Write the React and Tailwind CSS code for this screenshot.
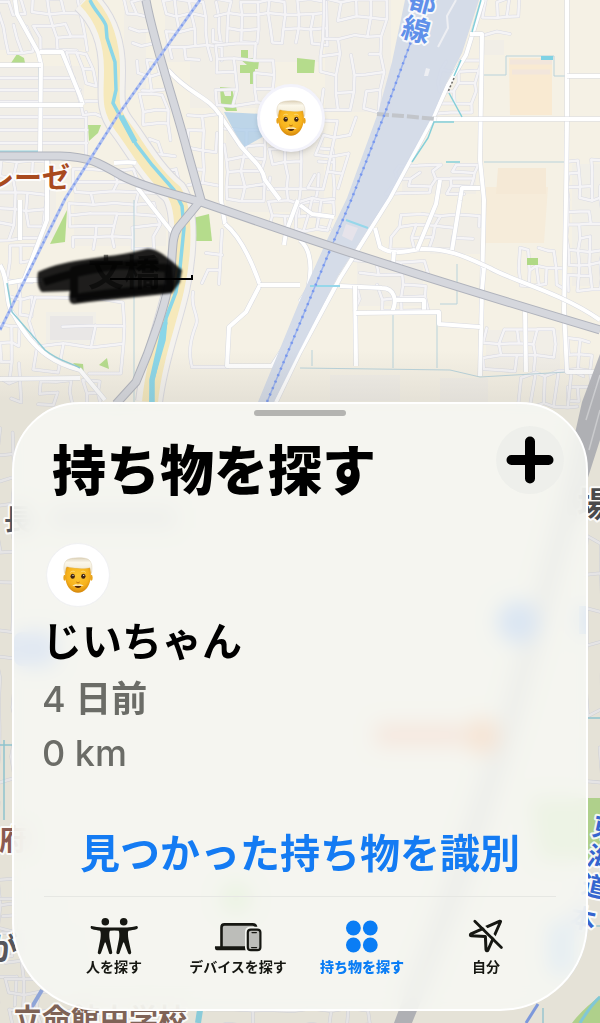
import { useId } from "react";
import clsx from "clsx";

// Small repeatable offset so that the streets do not look ruled
function jitter(a, b, amount) {
  const n = Math.sin(a * 12.9898 + b * 78.233) * 43758.5453;
  return (n - Math.floor(n) - 0.5) * amount;
}

// Builds a cols x rows street grid as one path, leaned sideways by `lean`
function grid(x, y, w, h, cols, rows, lean = 0) {
  const cw = w / cols;
  const ch = h / rows;
  const point = (c, r) => {
    const px = x + cw * c + (lean * r) / rows + jitter(x + c, y + r, cw * 0.35);
    const py = y + ch * r + jitter(y + c, x + r, ch * 0.3);
    return `${px.toFixed(1)} ${py.toFixed(1)}`;
  };
  let d = "";
  for (let r = 0; r <= rows; r++) {
    for (let c = 0; c <= cols; c++) {
      const skip = jitter(x + c * 3, y + r * 7, 1);
      if (c < cols && skip < 0.25) d += `M${point(c, r)}L${point(c + 1, r)}`;
      if (r < rows && skip > -0.22) d += `M${point(c, r)}L${point(c, r + 1)}`;
    }
  }
  return d;
}

const streets = [
  "M0 78H40M0 90H40M0 102H40M0 117H40M0 130H40M0 143H40",
  "M42 78H74M42 90H80M42 117H86M42 130H87M42 143H87M86 112V155",
  grid(-5, 0, 26, 52, 2, 4, 14),
  grid(30, 0, 48, 50, 3, 4, 12),
  grid(66, 52, 22, 64, 2, 4, 18),
  grid(122, 0, 22, 90, 2, 6, 20),
  grid(163, 0, 52, 60, 4, 4, 8),
  grid(215, 0, 110, 44, 8, 3),
  grid(215, 44, 60, 60, 3, 4),
  grid(325, 0, 60, 110, 4, 6, -4),
  grid(140, 95, 24, 90, 2, 6, 16),
  grid(190, 115, 28, 70, 2, 4),
  grid(226, 130, 36, 70, 2, 5),
  grid(270, 150, 62, 78, 4, 6),
  grid(325, 120, 30, 70, 2, 4, -16),
  grid(0, 162, 48, 78, 3, 5, -6),
  grid(72, 170, 85, 78, 4, 7),
  grid(10, 245, 24, 70, 2, 4, -4),
  grid(36, 300, 90, 70, 3, 3, -6),
  grid(0, 325, 20, 75, 2, 4),
  grid(40, 380, 60, 26, 4, 2),
  grid(444, 60, 35, 54, 2, 5, -8),
  grid(484, 0, 36, 33, 3, 2),
  grid(568, 160, 34, 130, 3, 10),
  grid(400, 165, 78, 28, 4, 4, -12),
  grid(520, 250, 44, 36, 5, 2),
  grid(357, 262, 68, 48, 3, 4),
  grid(484, 330, 70, 40, 4, 3, -2),
  grid(568, 340, 22, 60, 2, 4),
  grid(400, 215, 80, 34, 4, 3, -8),
  grid(522, 374, 60, 30, 5, 1, -4),
  grid(300, 200, 34, 30, 3, 2, -6),
  grid(-2, 430, 16, 600, 1, 24),
  grid(586, 540, 16, 240, 1, 7),
  grid(0, 900, 70, 125, 5, 8, 12),
  grid(210, 1010, 160, 16, 8, 1),
  "M193 292C190 310 200 315 196 325C188 345 190 360 192 367H228",
  "M206 253L222 255M222 230L219 284M202 283L208 270H219",
];

const localRoads = [
  "M15 0L17 14L38 52L41 64L40 154",
  "M0 65H41",
  "M40 52H62L80 96L83 105",
  "M0 105H83",
  "M168 70C190 95 208 96 220 115L240 145C250 158 262 165 265 180L280 200",
  "M221 115V200L225 224",
  "M114 163C125 162 132 162 136 163",
  "M137 187L150 204L172 232",
  "M225 224C240 236 252 262 260 285",
  "M260 285L246 312L229 327L227 366L272 366L300 322",
  "M260 285H300",
  "M298 200L286 232L284 245",
  "M20 200V240M47 160V220L24 280L7 283",
  "M0 265C10 280 4 305 14 315C35 355 60 365 80 370L105 400",
  "M0 379L80 378",
  "M25 280H42",
  "M483 0L466 55L448 85L433 118L390 198L340 278L300 352L276 402",
  "M470 34H482L480 160L484 200L482 290L480 376",
  "M567 0V120L566 200L564 310L567 372H594",
  "M433 119H600",
  "M567 76H600",
  "M375 228L380 247C392 255 402 252 420 249C450 248 468 258 490 268C510 280 560 292 600 320",
  "M340 286L382 288C394 288 398 300 392 312M396 300H424V312",
  "M355 286L356 366",
  "M356 313L439 312V324L480 327",
  "M417 250L436 204L440 180",
  "M460 200L452 250M484 268L482 290",
  "M525 310L526 372",
  "M480 188H462L460 200",
  "M300 205L312 214L334 217",
  "M300 240C314 252 311 275 308 290L300 302",
  "M394 252L393 264",
];

const blocks = [
  [0, 0, 84, 50],
  [0, 66, 84, 86],
  [124, 0, 22, 90],
  [165, 0, 155, 62],
  [190, 62, 84, 46],
  [325, 0, 66, 112],
  [226, 128, 98, 84],
  [0, 164, 56, 74],
  [74, 180, 92, 66],
  [46, 312, 50, 32],
  [484, 40, 20, 15],
  [572, 164, 28, 122],
  [357, 262, 66, 44],
  [430, 214, 52, 40],
  [486, 330, 74, 40],
  [402, 164, 74, 30],
  [330, 375, 70, 26],
  [440, 378, 48, 24],
];

function MapLabel({ x, y, size, fill, rotate = 0, children }) {
  return (
    <text
      x={x}
      y={y}
      fontSize={size}
      fontWeight="700"
      fill={fill}
      stroke="#ffffff"
      strokeOpacity="0.85"
      strokeWidth="4"
      strokeLinejoin="round"
      paintOrder="stroke"
      transform={`rotate(${rotate} ${x} ${y})`}
    >
      {children}
    </text>
  );
}

function MapView() {
  return (
    <svg
      className="absolute inset-0 h-full w-full"
      viewBox="0 0 600 1023"
      preserveAspectRatio="xMinYMin slice"
      role="img"
      aria-label="地図"
      fontFamily="'Noto Sans CJK JP', sans-serif"
    >
      <defs>
        <linearGradient id="shade" x1="0" y1="0" x2="0" y2="1">
          <stop offset="0" stopColor="#8d8a86" stopOpacity="0" />
          <stop offset="1" stopColor="#8d8a86" stopOpacity="0.15" />
        </linearGradient>
        <filter id="soft" x="-10%" y="-20%" width="120%" height="140%">
          <feGaussianBlur stdDeviation="1.2" />
        </filter>
      </defs>
      <rect width="600" height="1023" fill="#f5f1e5" />

      {/* Built-up blocks */}
      <g fill="#f0eee9" opacity="0.7">
        {blocks.map(([x, y, w, h]) => (
          <rect key={`${x}-${y}`} x={x} y={y} width={w} height={h} />
        ))}
      </g>
      <path d="M486 187H548L544 243H485z" fill="#f6ecda" />
      <path d="M509 58H552V115H510z" fill="#f9ead2" />
      <path d="M498 168H546V194H496z" fill="#f5e9d6" />
      <path d="M510 62H552M512 72H550" stroke="#f2e6dc" strokeWidth="5" />
      <path d="M50 316H93V340H50z" fill="#e9e7e6" />

      {/* Parks */}
      <g fill="#b5dc8c">
        <path d="M11 63L17 54L24 58L25 63z" />
        <path d="M88 125L101 125L98 133L89 141z" />
        <path d="M241 50H248V58H254V52V60L259 61L258 69H255V84H250V73H240V65H247L241 60z" />
        <path d="M220 87L232 88L237 111L226 111L221 103z" />
        <path d="M297 58L315 60L314 73H297z" />
        <path d="M50 244L67 210L65 242z" />
        <path d="M193 218L209 214L212 241H194z" />
        <path d="M73 363L83 364L84 374z" />
        <path d="M99 365L107 358L109 369z" />
        <path d="M530 798H600V860H540z" />
        <path d="M572 1023C580 1012 590 1004 600 996V1023z" />
      </g>
      <path d="M223 90H231V96H225z" fill="#f0eee8" />

      {/* Minor streets */}
      {streets.map((d, i) => (
        <g key={i} fill="none" strokeLinecap="round">
          <path d={d} stroke="#d9dae2" strokeWidth="3.5" />
          <path d={d} stroke="#f5f4f6" strokeWidth="2.5" />
        </g>
      ))}
      <path d="M527 258H538V265H527z" fill="#b0d985" />
      <g fill="none" stroke="#b9d3db" strokeWidth="1">
        <path d="M134 200V402M39 64V154" />
        <path d="M300 368L450 370L480 377L567 372" />
        <path d="M457 264V304H440M484 75H506V56H554V76H567M484 162H567" />
        <path d="M393 310V368M437 312V368M312 350V366" />
      </g>

      {/* River and banks */}
      <g fill="none">
        <path
          d="M84 0C106 20 112 45 112 70S108 108 122 126S150 172 174 192C186 210 184 255 176 290S154 360 149 402"
          stroke="#d9d9df"
          strokeWidth="28"
        />
        <path
          d="M84 0C106 20 112 45 112 70S108 108 122 126S150 172 174 192C186 210 184 255 176 290S154 360 149 402"
          stroke="#f4f2ee"
          strokeWidth="26"
        />
        <path
          d="M86 0C106 20 112 45 112 70S108 108 122 126S150 172 174 192C186 210 184 255 176 290S154 360 150 402"
          stroke="#f6e9bb"
          strokeWidth="16"
        />
        <path
          d="M90 0C94 10 105 20 106 26L107 38L115 62L116 90L113 103L120 116L136 144L152 165L174 190L182 206L184 228L180 268L176 292L166 318L164 340L152 382L151 402"
          stroke="#8ad6e8"
          strokeWidth="3.5"
        />
        <path d="M121 116L135 142M165 322L160 345L152 380V402" stroke="#8ad6e8" strokeWidth="5.5" />
      </g>

      {/* View cone next to the pin */}
      <path d="M224 112L262 114L264 136L243 148z" fill="#a9cbe8" opacity="0.75" />

      {/* Local roads */}
      {localRoads.map((d) => (
        <g key={d} fill="none" strokeLinejoin="round">
          <path d={d} stroke="#d8dae0" strokeWidth="5" />
          <path d={d} stroke="#ffffff" strokeWidth="4" />
        </g>
      ))}

      {/* Railway yard */}
      <path
        d="M405 0H479L462 53L446 84L432 117L388 198L338 276L300 350L274 402H258L300 300L327 240L347 198L378 113L392 62z"
        fill="#d2dae8"
        opacity="0.94"
      />
      <path d="M456 0L447 16L448 28L438 47" fill="none" stroke="#eeeff3" strokeWidth="2" />
      <path d="M426 68L430 69L428 76L424 76z" fill="#eeeff3" />
      <path d="M346 224L358 228L352 241L342 236z" fill="#e6e3ea" />
      <path
        d="M377 114L403 116L437 119"
        fill="none"
        stroke="#c2c5ca"
        strokeWidth="4"
        strokeDasharray="12 3"
      />
      <path d="M310 286L340 286M346 220L368 228" stroke="#96d7ea" strokeWidth="2" />
      <path d="M413 36L385 113L352 198L330 250L300 323L267 402" fill="none" stroke="#9bb3ee" strokeWidth="1.5" />
      <path
        d="M413 36L385 113L352 198L330 250L300 323L267 402"
        fill="none"
        stroke="#7797ee"
        strokeWidth="2.5"
        strokeDasharray="2 5"
      />
      <path
        d="M481 0L472 32M461 60L454 76M449 93L462 117M454 122H434L428 138L412 162M446 162H460"
        fill="none"
        stroke="#84cfd9"
        strokeWidth="1.5"
      />
      <path d="M541 56H553V60H541z" fill="#7fd2e4" />
      <path d="M454 78L448 92" stroke="#6c6a66" strokeWidth="1.5" strokeDasharray="2 2" />
      <path d="M7 283L12 312L45 350C60 362 70 362 80 368" fill="none" stroke="#8fcbd6" strokeWidth="1.5" />
      <path d="M0 152H38" stroke="#9bd8e6" strokeWidth="3" />

      {/* Main roads */}
      <g fill="none" strokeLinejoin="round">
        <g stroke="#b0b3bc" strokeWidth="9">
          <path d="M146 0C154 44 174 100 187 150L201 200L178 228C172 236 173 248 171 270C168 300 150 350 136 382L116 404" />
          <path d="M0 156H60C90 157 98 162 122 176C145 188 175 194 201 202L300 236C400 270 500 300 600 330" />
        </g>
        <g stroke="#d5d7dd" strokeWidth="7">
          <path d="M146 0C154 44 174 100 187 150L201 200L178 228C172 236 173 248 171 270C168 300 150 350 136 382L116 404" />
          <path d="M0 156H60C90 157 98 162 122 176C145 188 175 194 201 202L300 236C400 270 500 300 600 330" />
        </g>
      </g>

      {/* Rail line */}
      <path d="M200 0L118 115L65 199L0 330" fill="none" stroke="#afc0f0" strokeWidth="3" />
      <path
        d="M200 0L118 115L65 199L0 330"
        fill="none"
        stroke="#7f9bea"
        strokeWidth="2"
        strokeDasharray="2 4"
      />

      {/* Covered part, mostly hidden by the sheet */}
      <path d="M600 354L582 402L560 500L500 720L440 900L394 1023H412L470 880L520 720L584 490L600 440z" fill="#b6b7bd" />
      <path d="M600 375L586 420M600 410L589 450" stroke="#d5d6da" strokeWidth="1.5" />
      <circle cx="518" cy="622" r="21" fill="#1f74ff" />
      <rect x="14" y="632" width="42" height="34" rx="8" fill="#4a84ff" />
      <rect x="579" y="606" width="8" height="28" fill="#2f78ff" />
      <circle cx="482" cy="736" r="18" fill="#ff6a10" />
      <path d="M376 724H462V746H376z" fill="#ff7f58" />
      <path d="M50 508H175V528H50z" fill="#c0c0c6" />
      <circle cx="236" cy="898" r="15" fill="#a0dd78" />
      <rect x="548" y="920" width="26" height="56" rx="12" fill="#78b4ff" />
      <path d="M4 740V820M0 745H12M586 718H600" stroke="#8fcdda" strokeWidth="1.5" />
      <path d="M200 1010L198 1023" stroke="#8ad6e8" strokeWidth="6" />
      <path d="M588 926H600M543 1008V1023" stroke="#9cd0dc" strokeWidth="1.5" />
      <path d="M580 1023C588 1010 594 1002 600 997" fill="none" stroke="#7fd2e4" strokeWidth="3" />
      <path d="M538 1004L526 1023" stroke="#7b9bea" strokeWidth="3" />
      <path d="M42 990L30 1010" stroke="#8fa8e6" strokeWidth="4" />

      <rect y="350" width="600" height="50" fill="url(#shade)" />
      <rect y="400" width="600" height="623" fill="#8d8a86" opacity="0.15" />

      <MapLabel x={-14} y={188} size={28} fill="#a94a1e">
        レーゼ
      </MapLabel>
      <MapLabel x={407} y={7} size={28} fill="#6090ea" rotate={15}>
        都
      </MapLabel>
      <MapLabel x={400} y={36} size={28} fill="#6090ea" rotate={15}>
        線
      </MapLabel>
      <MapLabel x={4} y={530} size={28} fill="#55565c">
        長
      </MapLabel>
      <MapLabel x={577} y={517} size={34} fill="#4a4a4c">
        場
      </MapLabel>
      <MapLabel x={-1} y={850} size={28} fill="#8a5b50">
        府
      </MapLabel>
      <MapLabel x={-14} y={960} size={32} fill="#55565c">
        が
      </MapLabel>
      <MapLabel x={13} y={1030} size={29} fill="#7f6357">
        立命館中学校
      </MapLabel>
      <MapLabel x={591} y={835} size={26} fill="#3565cf" rotate={12}>
        東
      </MapLabel>
      <MapLabel x={586} y={864} size={26} fill="#3565cf" rotate={12}>
        海
      </MapLabel>
      <MapLabel x={580} y={893} size={26} fill="#3565cf" rotate={12}>
        道
      </MapLabel>
      <MapLabel x={568} y={925} size={26} fill="#3565cf" rotate={12}>
        本
      </MapLabel>

      {/* Marker strokes over a place name */}
      <g filter="url(#soft)">
        <path
          d="M38 272C70 257 110 259 146 249C158 247 172 262 182 270L180 282L172 293C140 297 110 299 74 304C68 304 69 296 70 291L42 292C37 288 37 278 38 272z"
          fill="#000000"
          opacity="0.88"
        />
        <path
          d="M44 282C80 270 120 264 158 262M74 298V270C110 260 140 268 168 268L170 288C140 290 110 292 76 298"
          fill="none"
          stroke="#000000"
          strokeWidth="8"
          strokeLinejoin="round"
          opacity="0.7"
        />
      </g>
      <text x="88" y="286" fontSize="36" fontWeight="700" fill="#000000" opacity="0.5">
        文橋
      </text>
      <path d="M110 279H192V275" fill="none" stroke="#000000" strokeWidth="2" />
    </svg>
  );
}

function GrandpaFace() {
  const id = useId();
  return (
    <svg className="h-9 w-[30px]" viewBox="0 0 90 108" aria-hidden="true">
      <defs>
        <radialGradient id={`${id}skin`} cx="0.5" cy="0.38" r="0.65">
          <stop offset="0" stopColor="#fdc935" />
          <stop offset="0.65" stopColor="#f7b21c" />
          <stop offset="1" stopColor="#cf800a" />
        </radialGradient>
        <linearGradient id={`${id}hair`} x1="0" y1="0" x2="0" y2="1">
          <stop offset="0" stopColor="#ddd2ba" />
          <stop offset="0.3" stopColor="#fbf7ea" />
          <stop offset="1" stopColor="#efe6cf" />
        </linearGradient>
      </defs>
      <ellipse cx="5" cy="62" rx="4" ry="9" fill="#e9a41c" />
      <ellipse cx="85" cy="62" rx="4" ry="9" fill="#e9a41c" />
      <path
        d="M7 36C8 20 82 20 83 36C85 58 83 78 72 93C63 104 54 107 45 107S27 104 18 93C7 78 5 58 7 36z"
        fill={`url(#${id}skin)`}
      />
      <path
        d="M5 50C1 34 1 18 12 9C24 1 60 0 74 6C88 13 89 34 85 50C83 44 83 38 81 32C68 36 24 35 10 28C8 34 7 44 5 50z"
        fill={`url(#${id}hair)`}
        stroke="#cdbf9f"
        strokeWidth="1"
      />
      <path d="M22 46C26 42 32 42 35 44M55 44C58 42 64 42 68 46" fill="none" stroke="#fbdc80" strokeWidth="3" />
      <ellipse cx="29" cy="58" rx="6.5" ry="7.5" fill="#3f2412" />
      <ellipse cx="61" cy="58" rx="6.5" ry="7.5" fill="#3f2412" />
      <circle cx="30" cy="55" r="2" fill="#ffffff" />
      <circle cx="62" cy="55" r="2" fill="#ffffff" />
      <path d="M40 75C43 78 47 78 50 75" fill="none" stroke="#b86d0c" strokeWidth="3" />
      <path d="M35 87H55C53 95 37 95 35 87z" fill="#4a2410" />
      <path d="M28 87C33 81 41 81 45 83C49 81 57 81 62 87C57 87 51 87 45 86C39 87 33 87 28 87z" fill="#fbe9b8" />
    </svg>
  );
}

function PeopleIcon() {
  return (
    <svg className="h-[38px] w-12" viewBox="0 0 48 38" fill="currentColor" aria-hidden="true">
      <circle cx="15.3" cy="4.8" r="3.8" />
      <circle cx="33.7" cy="4.8" r="3.8" />
      <path d="M1.6 9.1C5 10 9 10.5 12 10.6H37C40 10.5 44 10 46.6 9.1C48 9 48.4 11.4 47 12C44 13 41 13.4 38.6 13.8C37.6 15 38 19 38.4 22L41.2 35.2C41.4 37.4 38.8 38 38 36L34 25.4H33.2L29.6 36C28.8 38 26 37.2 26.4 35.2L29 22C29.4 19 29.6 15.4 28.6 13.8L24.3 13.4L20 13.8C19 15.4 19.2 19 19.6 22L22.2 35.2C22.6 37.2 19.8 38 19 36L15.6 25.4H14.8L11 36C10.2 38 7.4 37.4 7.8 35.2L10.4 22C10.8 19 11 15 10 13.8C7.6 13.4 4.6 13 1.8 12C.2 11.4 .4 9.1 1.6 9.1z" />
    </svg>
  );
}

function DevicesIcon() {
  return (
    <svg className="h-[38px] w-12" viewBox="0 0 48 38" aria-hidden="true">
      <path d="M7.5 30V10.5C7.5 8.4 8.4 7.4 10.5 7.4H38.5C41 7.4 42 8.4 42.2 10.6V30z" fill="#bcbdb9" />
      <path
        d="M7.5 30V10.5C7.5 8.4 8.4 7.4 10.5 7.4H38.5C41 7.4 42 8.4 42.2 10.6"
        fill="none"
        stroke="currentColor"
        strokeWidth="2.6"
      />
      <path d="M1 29.2H34V33.2H3C1.4 33.2 .6 31.6 1 29.2z" fill="currentColor" />
      <rect x="31" y="9.8" width="17" height="26" rx="5" fill="#f4f5f0" />
      <rect x="33.8" y="12.6" width="12.6" height="20.6" rx="3" fill="#bcbdb9" stroke="currentColor" strokeWidth="2.2" />
      <path d="M38 15.6H42.4M37.6 30.6H42.6" stroke="currentColor" strokeWidth="1.2" strokeLinecap="round" />
    </svg>
  );
}

function ItemsIcon() {
  return (
    <svg className="h-[38px] w-12" viewBox="0 0 48 38" fill="currentColor" aria-hidden="true">
      <circle cx="15.4" cy="11" r="7.4" />
      <circle cx="32.3" cy="11" r="7.4" />
      <circle cx="15.4" cy="28" r="7.4" />
      <circle cx="32.3" cy="28" r="7.4" />
    </svg>
  );
}

function MeIcon() {
  return (
    <svg className="h-[38px] w-12" viewBox="0 0 48 38" fill="none" strokeLinejoin="round" aria-hidden="true">
      <path
        d="M38.4 5C38.8 4.4 38.4 4 37.8 4.2L9 16.8C8 17.4 8.2 18.6 9.2 18.7L23.4 19.6L24 32.6C24.1 34 25.4 34.2 26 33z"
        stroke="currentColor"
        strokeWidth="3"
      />
      <path d="M14.8 2.4L41.4 28.6" stroke="#f4f5f0" strokeWidth="2.6" />
      <path d="M12.8 4.2L39.4 30.6" stroke="currentColor" strokeWidth="2.8" strokeLinecap="round" />
    </svg>
  );
}

const tabs = [
  { label: "人を探す", Icon: PeopleIcon },
  { label: "デバイスを探す", Icon: DevicesIcon },
  { label: "持ち物を探す", Icon: ItemsIcon, active: true },
  { label: "自分", Icon: MeIcon },
];

export default function App() {
  return (
    <div className="relative flex min-h-screen flex-col overflow-hidden font-[Inter,'Noto_Sans_CJK_JP',sans-serif]">
      <MapView />

      {/* Map pin */}
      <div className="absolute top-[84px] left-[257px] flex size-[68px] items-center justify-center rounded-full border-3 border-[#f3f3fb] bg-white shadow-md">
        <GrandpaFace />
      </div>

      {/* Bottom sheet */}
      <main className="relative mx-3 mt-auto mb-3 flex flex-col rounded-t-[68px] rounded-b-[88px] border-2 border-white bg-[#f7f8f3]/86 pt-1.5 pb-8 backdrop-blur-[10px]">
        <div className="mx-auto h-1.5 w-[92px] rounded-full bg-[#b4b4b1]" />

        <header className="mt-2.5 flex items-start justify-between pr-[22px] pl-[38px]">
          <h1 className="mt-[18px] text-[54px] leading-14 font-black text-black">
            持ち物を探す
          </h1>
          <button
            type="button"
            aria-label="追加"
            className="flex size-[68px] items-center justify-center rounded-full bg-[#eeefeb]"
          >
            <svg className="size-12" viewBox="0 0 48 48" aria-hidden="true">
              <path
                d="M24 5.5V42.5M5.5 24H42.5"
                stroke="#000000"
                strokeWidth="10"
                strokeLinecap="round"
              />
            </svg>
          </button>
        </header>

        <section className="mt-11 px-7">
          <div className="ml-[5px] flex size-[62px] items-center justify-center rounded-full bg-white shadow-[0_0_2px_#e4e4f4]">
            <GrandpaFace />
          </div>
          <h2 className="mt-3 text-[40px] leading-12 font-bold text-black">
            じいちゃん
          </h2>
          <div className="mt-1.5 text-[36px] leading-[54px] font-medium text-[#6b6c67]">
            <p>
              4 <span className="font-bold">日前</span>
            </p>
            <p>0 km</p>
          </div>
        </section>

        <a
          href="#identify"
          className="mt-[50px] text-center text-[40px] leading-12 font-bold text-[#147bf3]"
        >
          見つかった持ち物を識別
        </a>

        <nav className="mx-[30px] mt-[18px] grid grid-cols-4 border-t border-[#e6e7e3] px-2 pt-5">
          {tabs.map(({ label, Icon, active }) => (
            <button
              key={label}
              type="button"
              aria-current={active ? "page" : undefined}
              className={clsx(
                "flex flex-col items-center gap-0.5 text-[14px] leading-5 whitespace-nowrap",
                active ? "font-black text-[#0a7df5]" : "font-bold text-[#161712]"
              )}
            >
              <Icon />
              {label}
            </button>
          ))}
        </nav>
      </main>
    </div>
  );
}
